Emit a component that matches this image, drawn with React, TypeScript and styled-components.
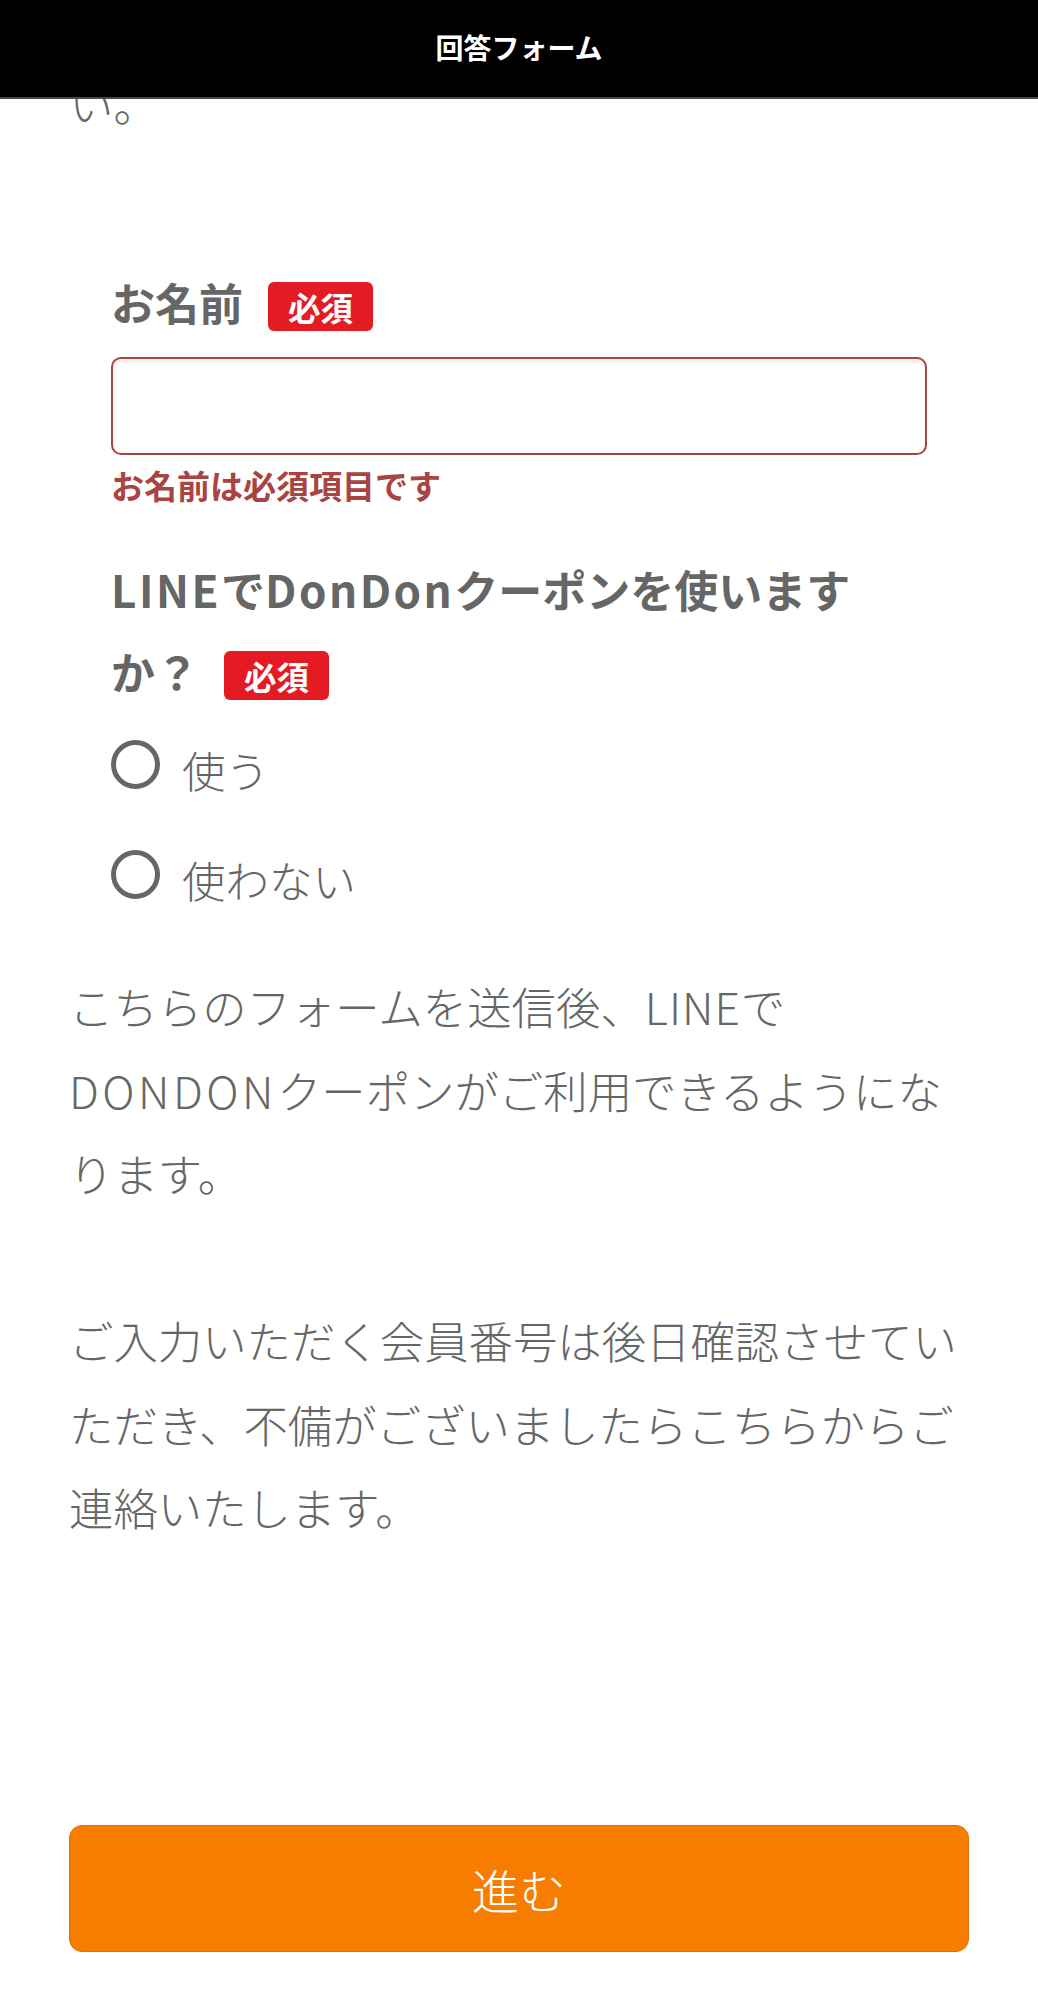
import React from "react";
import styled, { createGlobalStyle } from "styled-components";

const Global = createGlobalStyle`
  html, body { margin: 0; padding: 0; background: #fff; }
  body {
    font-family: "Noto Sans CJK JP", "Noto Sans", sans-serif;
    color: #666;
    -webkit-font-smoothing: antialiased;
  }
  * { box-sizing: border-box; }
`;

const Header = styled.header`
  position: fixed;
  top: 0;
  left: 0;
  right: 0;
  height: 99px;
  background: #000;
  border-bottom: 2px solid #4a4a4a;
  display: flex;
  align-items: center;
  justify-content: center;
  z-index: 10;
`;

const Title = styled.h1`
  margin: 0;
  padding-bottom: 4px;
  font-size: 28px;
  line-height: 1;
  font-weight: 700;
  color: #fff;
`;

const Page = styled.main`
  padding: 61px 69px 47px;
`;

const Text = styled.p`
  margin: 0;
  font-size: 44.4px;
  line-height: 83.5px;
  font-weight: 300;
  color: #666;
  white-space: nowrap;
`;

const Intro = styled(Text)`
  line-height: 83px;
`;

const Latin = styled.span<{ $spacing: number }>`
  letter-spacing: ${(p) => p.$spacing}px;
`;

const Form = styled.form`
  padding: 0 42px;
`;

const FieldGroup = styled.div<{ $top: number }>`
  margin-top: ${(p) => p.$top}px;
`;

const Label = styled.div`
  font-size: 44px;
  line-height: 82px;
  font-weight: 700;
  color: #666;
  white-space: nowrap;
`;

const Required = styled.span`
  display: inline-block;
  vertical-align: middle;
  height: 49px;
  margin-left: 25px;
  margin-top: -6px;
  padding: 0 20px;
  border-radius: 6px;
  background: #e51b24;
  color: #fff;
  font-size: 32.5px;
  line-height: 49px;
  font-weight: 700;
  letter-spacing: 0;
`;

const Input = styled.input`
  display: block;
  width: 100%;
  height: 98px;
  margin-top: 14px;
  padding: 0 20px;
  border: 2px solid #a94442;
  border-radius: 10px;
  background: #fff;
  box-shadow: inset 0 3px 3px rgba(0, 0, 0, 0.075);
  font-size: 43px;
  font-family: inherit;
  outline: none;
`;

const ErrorText = styled.div`
  margin-top: 7px;
  font-size: 33px;
  line-height: 46px;
  font-weight: 700;
  color: #a94442;
`;

const RadioRow = styled.label`
  display: flex;
  align-items: center;
  gap: 22px;
  height: 110px;
`;

const RadioCircle = styled.input`
  appearance: none;
  -webkit-appearance: none;
  flex: none;
  width: 49px;
  height: 49px;
  margin: -6px 0 0;
  border: 5px solid #666;
  border-radius: 50%;
  background: #fff;
`;

const RadioText = styled.span`
  padding-top: 6px;
  font-size: 43.5px;
  line-height: 1;
  font-weight: 300;
  color: #666;
`;

const Notice = styled(Text)`
  margin-top: 32px;
`;

const SubmitButton = styled.button`
  display: block;
  width: 100%;
  height: 127px;
  margin-top: 276px;
  border: 1px solid #e07000;
  border-radius: 13px;
  background: #f67d00;
  color: #fff;
  font-family: inherit;
  font-size: 47px;
  font-weight: 300;
  line-height: 1;
  cursor: pointer;
`;

export default function App() {
  return (
    <>
      <Global />
      <Header>
        <Title>回答フォーム</Title>
      </Header>
      <Page>
        <Intro>い。</Intro>
        <Form onSubmit={(e) => e.preventDefault()}>
          <FieldGroup $top={117}>
            <Label>
              お名前<Required>必須</Required>
            </Label>
            <Input type="text" aria-label="お名前" />
            <ErrorText>お名前は必須項目です</ErrorText>
          </FieldGroup>
          <FieldGroup $top={40}>
            <Label>
              <Latin $spacing={2.5}>LINE</Latin>で<Latin $spacing={2.5}>DonDon</Latin>
              クーポンを使います
              <br />
              か？<Required>必須</Required>
            </Label>
            <RadioRow>
              <RadioCircle type="radio" name="coupon" value="use" />
              <RadioText>使う</RadioText>
            </RadioRow>
            <RadioRow>
              <RadioCircle type="radio" name="coupon" value="nouse" />
              <RadioText>使わない</RadioText>
            </RadioRow>
          </FieldGroup>
        </Form>
        <Notice>
          こちらのフォームを送信後、<Latin $spacing={1}>LINE</Latin>で
          <br />
          <Latin $spacing={3.5}>DONDON</Latin>クーポンがご利用できるようにな
          <br />
          ります。
          <br />
          <br />
          ご入力いただく会員番号は後日確認させてい
          <br />
          ただき、不備がございましたらこちらからご
          <br />
          連絡いたします。
        </Notice>
        <SubmitButton type="button">進む</SubmitButton>
      </Page>
    </>
  );
}
